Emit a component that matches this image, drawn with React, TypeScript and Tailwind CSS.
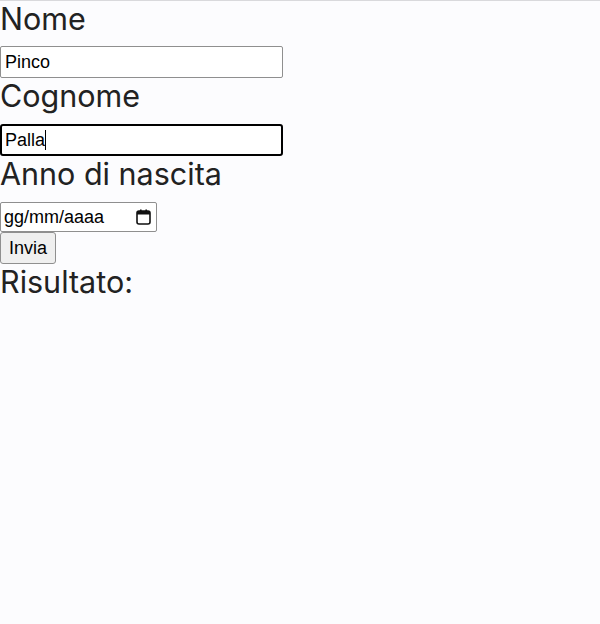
import React from "react";

const labelCls =
  "block text-[30.5px] leading-[35px] text-[#222222] font-['Inter',sans-serif]";
const inputFont = "font-['Liberation_Sans',Arial,sans-serif] text-[18px] text-black";

export default function App() {
  return (
    <div className="min-h-[624px] w-[600px] bg-[#fcfcfe] border-t border-[#d9d9dc]">
      <div className={`${labelCls} mb-[10px]`}>Nome</div>
      <div
        className={`box-border h-[32px] w-[283px] border border-[#8f8f8f] rounded-[2px] bg-white pl-[4px] flex items-center ${inputFont}`}
      >
        Pinco
      </div>
      <div className={`${labelCls} mb-[11px]`}>Cognome</div>
      <div
        className={`box-border h-[32px] w-[283px] border-2 border-black rounded-[3px] bg-white pl-[3px] flex items-center ${inputFont}`}
      >
        <span>Palla</span>
        <span className="inline-block w-px h-[20px] bg-black" />
      </div>
      <div className={`${labelCls} mb-[11px]`}>Anno di nascita</div>
      <div
        className={`box-border h-[30px] w-[157px] border border-[#8f8f8f] rounded-[2px] bg-white pl-[3px] pr-[5px] flex items-center justify-between ${inputFont}`}
      >
        <span>gg/mm/aaaa</span>
        <svg width="15" height="16" viewBox="0 0 15 16" fill="none">
          <rect x="1" y="2" width="13" height="13" rx="2" stroke="#111" strokeWidth="1.6" />
          <rect x="1" y="2" width="13" height="3.5" fill="#111" />
          <rect x="4" y="0.5" width="1.6" height="2.5" fill="#111" />
          <rect x="9.4" y="0.5" width="1.6" height="2.5" fill="#111" />
        </svg>
      </div>
      <div
        className={`box-border h-[32px] w-[56px] border border-[#8f8f8f] rounded-[3px] bg-[#efefef] flex items-center justify-center ${inputFont}`}
      >
        Invia
      </div>
      <div className={`${labelCls} mb-[11px]`}>Risultato:</div>
    </div>
  );
}
